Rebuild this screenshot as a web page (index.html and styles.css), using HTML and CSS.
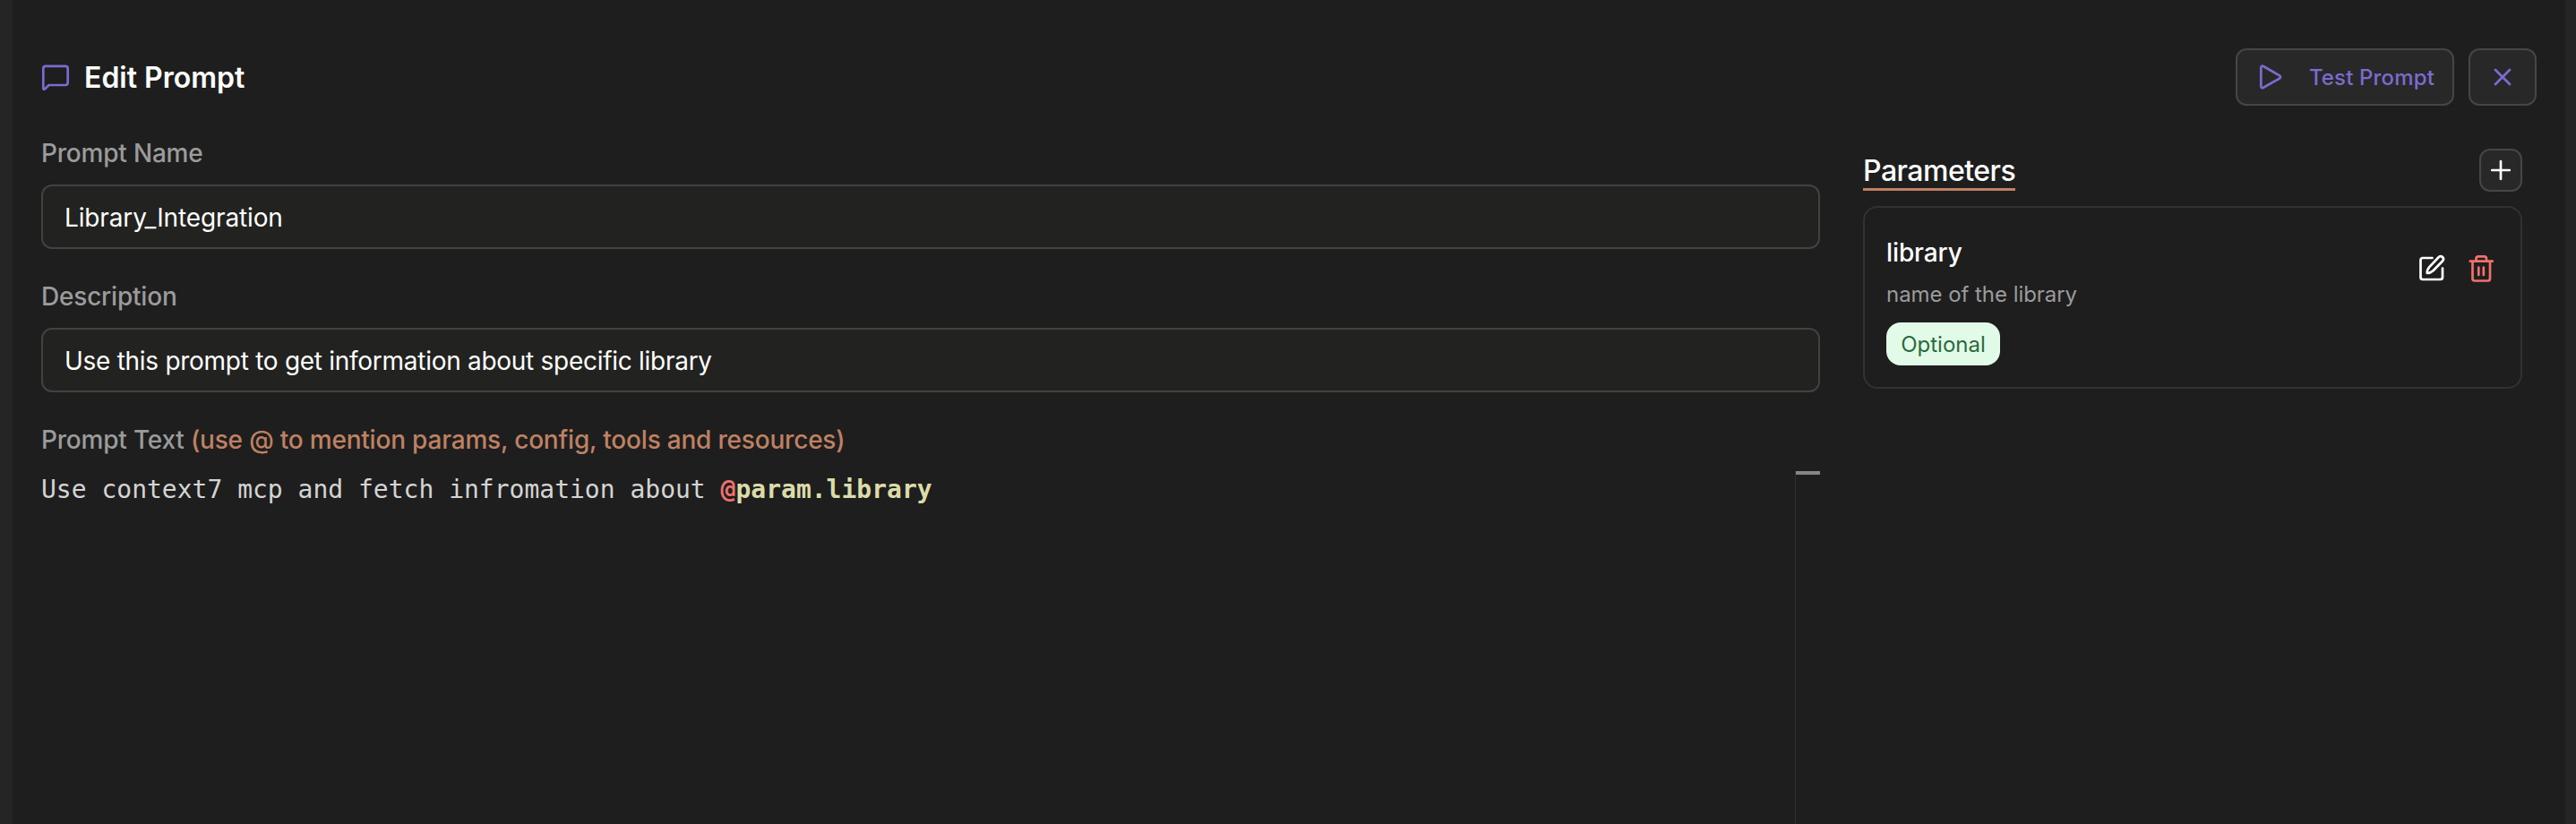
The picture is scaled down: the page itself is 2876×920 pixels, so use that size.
FILE: index.html
```html
<!DOCTYPE html>
<html lang="en">
<head>
<meta charset="utf-8">
<title>Edit Prompt</title>
<link rel="stylesheet" href="styles.css">
</head>
<body>
<div class="panel">
  <header class="header">
    <svg class="icon-chat" viewBox="0 0 32 32"><path d="M5 3.800H27Q29.700 3.800 29.700 6.500V22.300Q29.700 25 27 25H8.500L4.500 29Q2.300 31 2.300 28V6.500Q2.300 3.800 5 3.800Z"/></svg>
    <h1 class="title">Edit Prompt</h1>
    <div class="actions">
      <button class="btn btn-test">
        <svg class="icon-play" viewBox="0 0 32 32"><path d="M6.300 5.700V26Q6.300 29 9 27.700L26.700 17.800Q29.400 16 26.700 14.200L9 4Q6.300 2.700 6.300 5.700Z"/></svg>
        <span>Test Prompt</span>
      </button>
      <button class="btn btn-close"><svg class="icon-x" viewBox="0 0 20 20"><path d="M2 2L18 18M18 2L2 18"/></svg></button>
    </div>
  </header>
  <main class="main">
    <section class="form">
      <div class="field">
        <label class="label">Prompt Name</label>
        <div class="input">Library_Integration</div>
      </div>
      <div class="field">
        <label class="label">Description</label>
        <div class="input input-long">Use this prompt to get information about specific library</div>
      </div>
      <div class="field field-editor">
        <label class="label">Prompt Text <span class="hint">(use @ to mention params, config, tools and resources)</span></label>
        <div class="editor">
          <div class="code">Use context7 mcp and fetch infromation about <b class="at">@</b><b class="ref">param.library</b></div>
          <div class="ruler"><div class="ruler-mark"></div></div>
        </div>
      </div>
    </section>
    <aside class="side">
      <div class="side-head">
        <h2 class="side-title">Parameters</h2>
        <button class="btn btn-add"><svg class="icon-plus" viewBox="0 0 22 22"><path d="M11 1.200V20.800M1.200 11H20.800"/></svg></button>
      </div>
      <div class="card">
        <div class="card-info">
          <div class="param-name">library</div>
          <div class="param-desc">name of the library</div>
          <span class="pill">Optional</span>
        </div>
        <div class="card-tools">
          <svg class="icon-edit" viewBox="0 0 30 30"><path d="M15.500 4H5Q2.500 4 2.500 6.500V25.500Q2.500 28 5 28H24.500Q27 28 27 25.500V15.500"/><path d="M22.800 3Q25 1.200 27 3Q29 5 27.200 7.200L16.500 18.300Q13.500 21 9.800 21Q9.500 17 12.500 13.800Z"/></svg>
          <svg class="icon-trash" viewBox="0 0 28 32"><path d="M1.800 7.700H26.800M4.500 7.700V27Q4.500 29.500 7 29.500H21.500Q24 29.500 24 27V7.700M8.500 7.500V4.800Q8.500 2.400 11 2.400H17.500Q20 2.400 20 4.800V7.500M11.300 14.500V23M16.800 14.500V23"/></svg>
        </div>
      </div>
    </aside>
  </main>
</div>
</body>
</html>
```
FILE: styles.css
```css
* { box-sizing: border-box; }
body {
  margin: 0;
  height: 920px;
  padding: 0 12px 0 14px;
  overflow: hidden;
  background: #252525;
  font-family: Inter, "Liberation Sans", sans-serif;
  color: #fff;
}
svg { display: block; flex: none; overflow: visible; fill: none; stroke: currentColor; stroke-width: 2.7; stroke-linecap: round; stroke-linejoin: round; }
h1, h2 { margin: 0; }
.panel { display: flex; flex-direction: column; height: 920px; padding: 54px 32px 0; background: #1e1e1e; }
.header { display: flex; align-items: center; height: 64px; margin-bottom: 32px; flex: none; }
.icon-chat { width: 32px; height: 32px; color: #7c6bcf; }
.title { margin-left: 16px; padding-top: 2px; font-size: 32px; line-height: 44px; font-weight: 600; }
.actions { display: flex; gap: 16px; margin-left: auto; }
.btn {
  display: flex; align-items: center; justify-content: center;
  padding: 0; border: 2px solid #464646; border-radius: 12px;
  background: #282828; color: #7c6bcf; font-family: inherit;
}
.btn-test { width: 244px; height: 64px; padding: 0 20px; justify-content: space-between; font-size: 24px; font-weight: 500; letter-spacing: 0.15px; }
.icon-play { width: 32px; height: 32px; }
.btn-close { width: 76px; height: 64px; }
.icon-x { width: 20px; height: 20px; }
.main { display: flex; flex: 1; gap: 48px; }
.form { display: flex; flex-direction: column; gap: 32px; width: 1986px; }
.field { display: flex; flex-direction: column; gap: 16px; }
.field-editor { flex: 1; }
.label { height: 40px; line-height: 42px; font-size: 28px; font-weight: 500; letter-spacing: -0.2px; color: #9b9b9b; white-space: pre; }
.hint { color: #be8163; }
.input { height: 72px; padding: 0 24px; border: 2px solid #424240; border-radius: 12px; background: #222220; font-size: 28px; line-height: 70px; letter-spacing: -0.13px; }
.input-long { letter-spacing: -0.28px; }
.editor { display: flex; justify-content: space-between; flex: 1; }
.code { font: 28px/42px "DejaVu Sans Mono", monospace; color: #d4d4d4; white-space: pre; }
.at { color: #f0716b; }
.ref { color: #dcdcaa; }
.ruler { width: 28px; border-left: 1px solid #303030; }
.ruler-mark { height: 4px; background: #868686; }
.side { width: 736px; padding-top: 16px; }
.side-head { display: flex; justify-content: space-between; height: 48px; margin-bottom: 16px; }
.side-title { height: 47px; line-height: 50px; border-bottom: 3px solid #be8163; font-size: 32px; font-weight: 500; letter-spacing: -0.5px; }
.btn-add { width: 48px; height: 48px; color: #fff; }
.icon-plus { width: 22px; height: 22px; }
.card { display: flex; justify-content: space-between; height: 204px; padding: 30px 30px 24px 24px; border: 2px solid #323232; border-radius: 16px; }
.param-name { height: 40px; line-height: 40px; font-size: 28px; font-weight: 500; letter-spacing: -0.1px; }
.param-desc { height: 36px; margin-top: 9px; line-height: 36px; font-size: 24px; letter-spacing: -0.05px; color: #9b9b9b; }
.pill { display: block; width: 127px; height: 48px; margin-top: 13px; border-radius: 16px; background: #e2fbe8; color: #2b6a3c; font-size: 24px; line-height: 49px; text-align: center; }
.card-tools { display: flex; gap: 26px; padding-top: 22px; }
.icon-edit { width: 30px; height: 30px; }
.icon-trash { width: 28px; height: 32px; color: #f0716b; }
```
